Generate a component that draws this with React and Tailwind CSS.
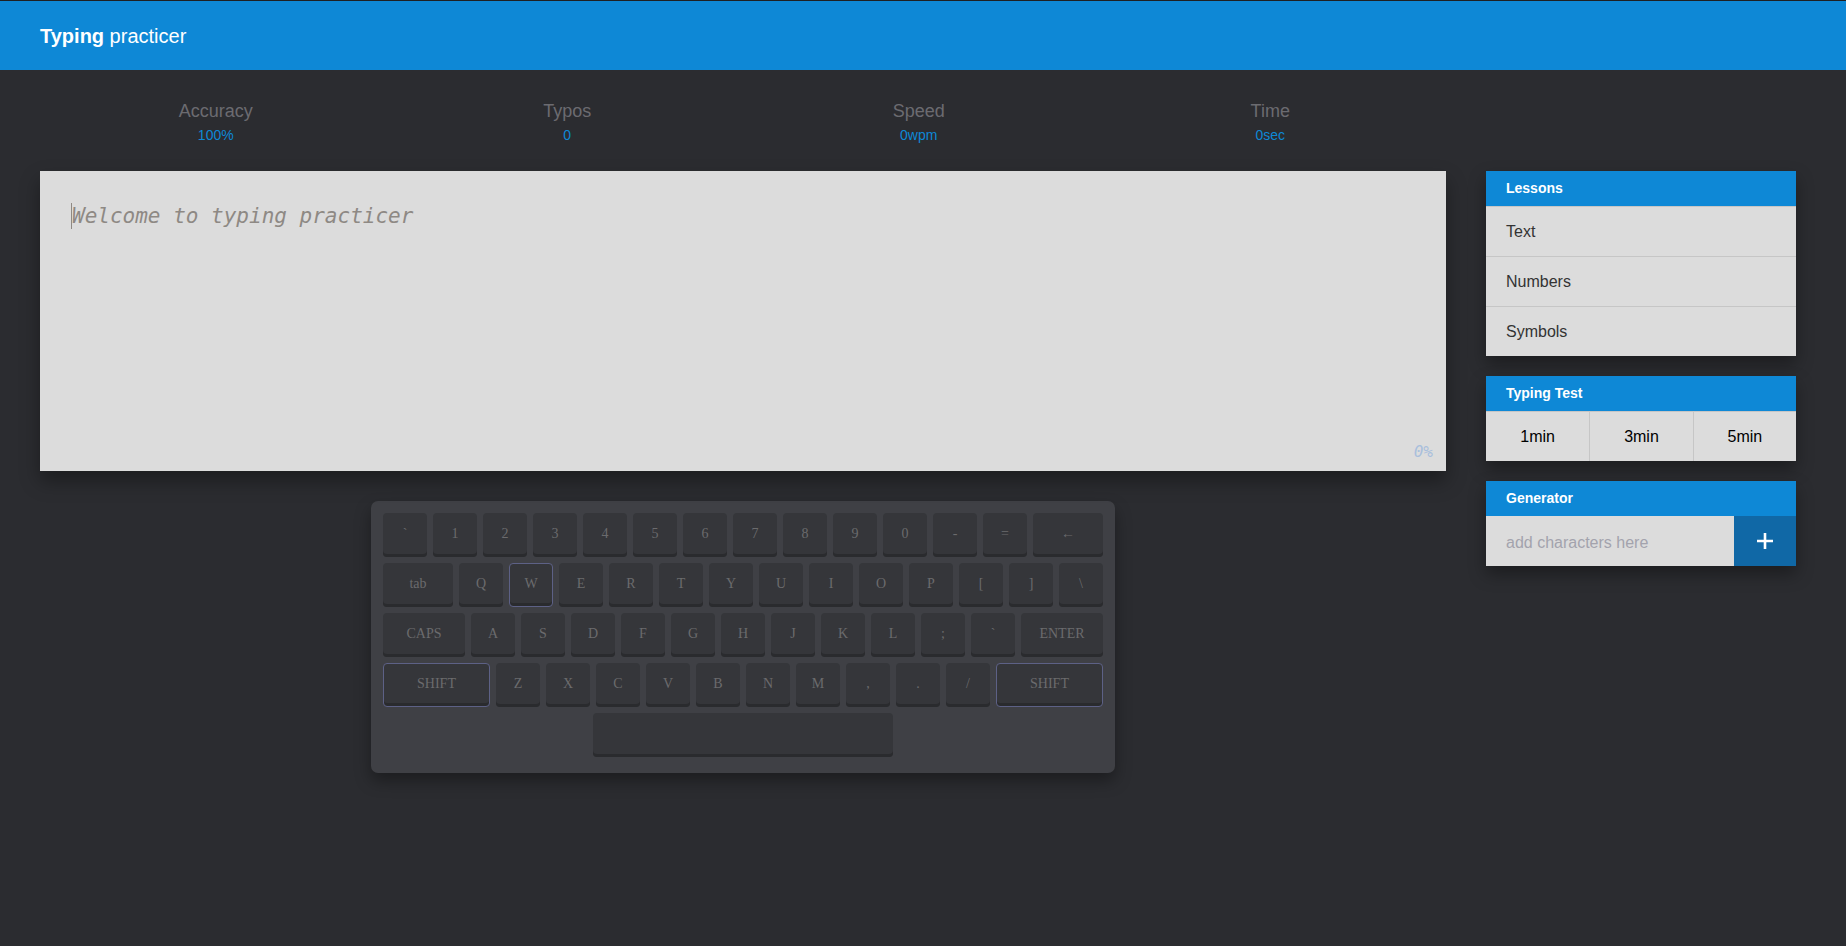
const stats = [
  { label: 'Accuracy', value: '100%' },
  { label: 'Typos', value: '0' },
  { label: 'Speed', value: '0wpm' },
  { label: 'Time', value: '0sec' },
]

const key = (label, w = 'w-[44px]', hl = false) => ({ label, w, hl })

const rows = [
  [...'`1234567890-='.split('').map((c) => key(c)), key('←', 'w-[70px]')],
  [key('tab', 'w-[70px]'), ...'QWERTYUIOP[]\\'.split('').map((c) => key(c, 'w-[44px]', c === 'W'))],
  [key('CAPS', 'w-[82px]'), ...'ASDFGHJKL;`'.split('').map((c) => key(c)), key('ENTER', 'w-[82px]')],
  [key('SHIFT', 'w-[107px]', true), ...'ZXCVBNM,./'.split('').map((c) => key(c)), key('SHIFT', 'w-[107px]', true)],
  [key('', 'w-[300px]')],
]

function Key({ k }) {
  return (
    <div
      className={`${k.w} h-[44px] rounded-[4px] bg-[#35363a] shadow-[inset_0_-3px_0_#2a2b2e] flex items-center justify-center pb-[3px] text-[14px] text-[#6b6b6d] ${
        k.hl ? 'border border-[#5d6186]' : ''
      }`}
      style={{ fontFamily: '"Liberation Serif", "Times New Roman", serif' }}
    >
      {k.label}
    </div>
  )
}

function Card({ title, children }) {
  return (
    <div className="shadow-[0_8px_16px_rgba(0,0,0,0.35)]">
      <div className="h-[35px] bg-[#0e88d6] flex items-center pl-5 text-[14px] font-bold text-white">{title}</div>
      <div className="bg-[#dcdcdc]">{children}</div>
    </div>
  )
}

export default function App() {
  return (
    <div
      className="min-h-screen bg-[#2b2c30]"
      style={{ fontFamily: '"Liberation Sans", Arial, sans-serif' }}
    >
      <header className="h-[70px] border-t border-[#1f2023] bg-[#0e88d6] flex items-center px-10 text-[20px] text-white">
        <span className="font-bold">Typing</span>
        <span>&nbsp;practicer</span>
      </header>

      <div className="flex gap-10 pl-10 pr-[50px]">
        <div className="w-[1406px]">
          <div className="grid grid-cols-4 pt-[31px]">
            {stats.map((s) => (
              <div key={s.label} className="flex flex-col items-center">
                <div className="text-[18px] leading-[20px] text-[#6b6b70]">{s.label}</div>
                <div className="mt-[6px] text-[14px] leading-[16px] text-[#0e88d6]">{s.value}</div>
              </div>
            ))}
          </div>

          <div className="relative mt-[28px] h-[300px] bg-[#dcdcdc] shadow-[0_10px_18px_rgba(0,0,0,0.35)]">
            <div
              className="flex pl-[31px] pt-[29px] text-[21px] leading-[32px] italic text-[#8e8984]"
              style={{ fontFamily: '"DejaVu Sans Mono", monospace' }}
            >
              <span className="w-px h-[26px] mt-[3px] bg-[#8e8984]" />
              <span>Welcome to typing practicer</span>
            </div>
            <div
              className="absolute right-[13px] bottom-[9px] text-[16px] leading-[20px] italic text-[#a9bfdc]"
              style={{ fontFamily: '"DejaVu Sans Mono", monospace' }}
            >
              0%
            </div>
          </div>

          <div className="flex justify-center mt-[30px]">
            <div className="w-[744px] rounded-[7px] bg-[#3f4045] pt-3 px-3 pb-4 flex flex-col gap-[6px] shadow-[0_8px_16px_rgba(0,0,0,0.35)]">
              {rows.map((row, i) => (
                <div key={i} className="flex justify-center gap-[6px]">
                  {row.map((k, j) => (
                    <Key key={j} k={k} />
                  ))}
                </div>
              ))}
            </div>
          </div>
        </div>

        <div className="w-[310px] pt-[101px] flex flex-col gap-5">
          <Card title="Lessons">
            {['Text', 'Numbers', 'Symbols'].map((t) => (
              <div key={t} className="h-[50px] flex items-center pl-5 border-t border-[#c6c6c6] text-[16px] text-[#333]">
                {t}
              </div>
            ))}
          </Card>

          <Card title="Typing Test">
            <div className="grid grid-cols-3 h-[50px] border-t border-[#c6c6c6]">
              {['1min', '3min', '5min'].map((t, i) => (
                <div
                  key={t}
                  className={`flex items-center justify-center text-[16px] text-black ${i > 0 ? 'border-l border-[#c6c6c6]' : ''}`}
                >
                  {t}
                </div>
              ))}
            </div>
          </Card>

          <Card title="Generator">
            <div className="flex h-[50px]">
              <input
                className="flex-1 min-w-0 bg-[#dcdcdc] pl-5 pt-[3px] text-[16px] text-[#333] placeholder:text-[#a3a3ad] outline-none"
                placeholder="add characters here"
              />
              <button className="w-[62px] bg-[#1068a6] flex items-center justify-center">
                <svg width="18" height="18" viewBox="0 0 18 18">
                  <path d="M9 1v16M1 9h16" stroke="white" strokeWidth="2.6" />
                </svg>
              </button>
            </div>
          </Card>
        </div>
      </div>
    </div>
  )
}
